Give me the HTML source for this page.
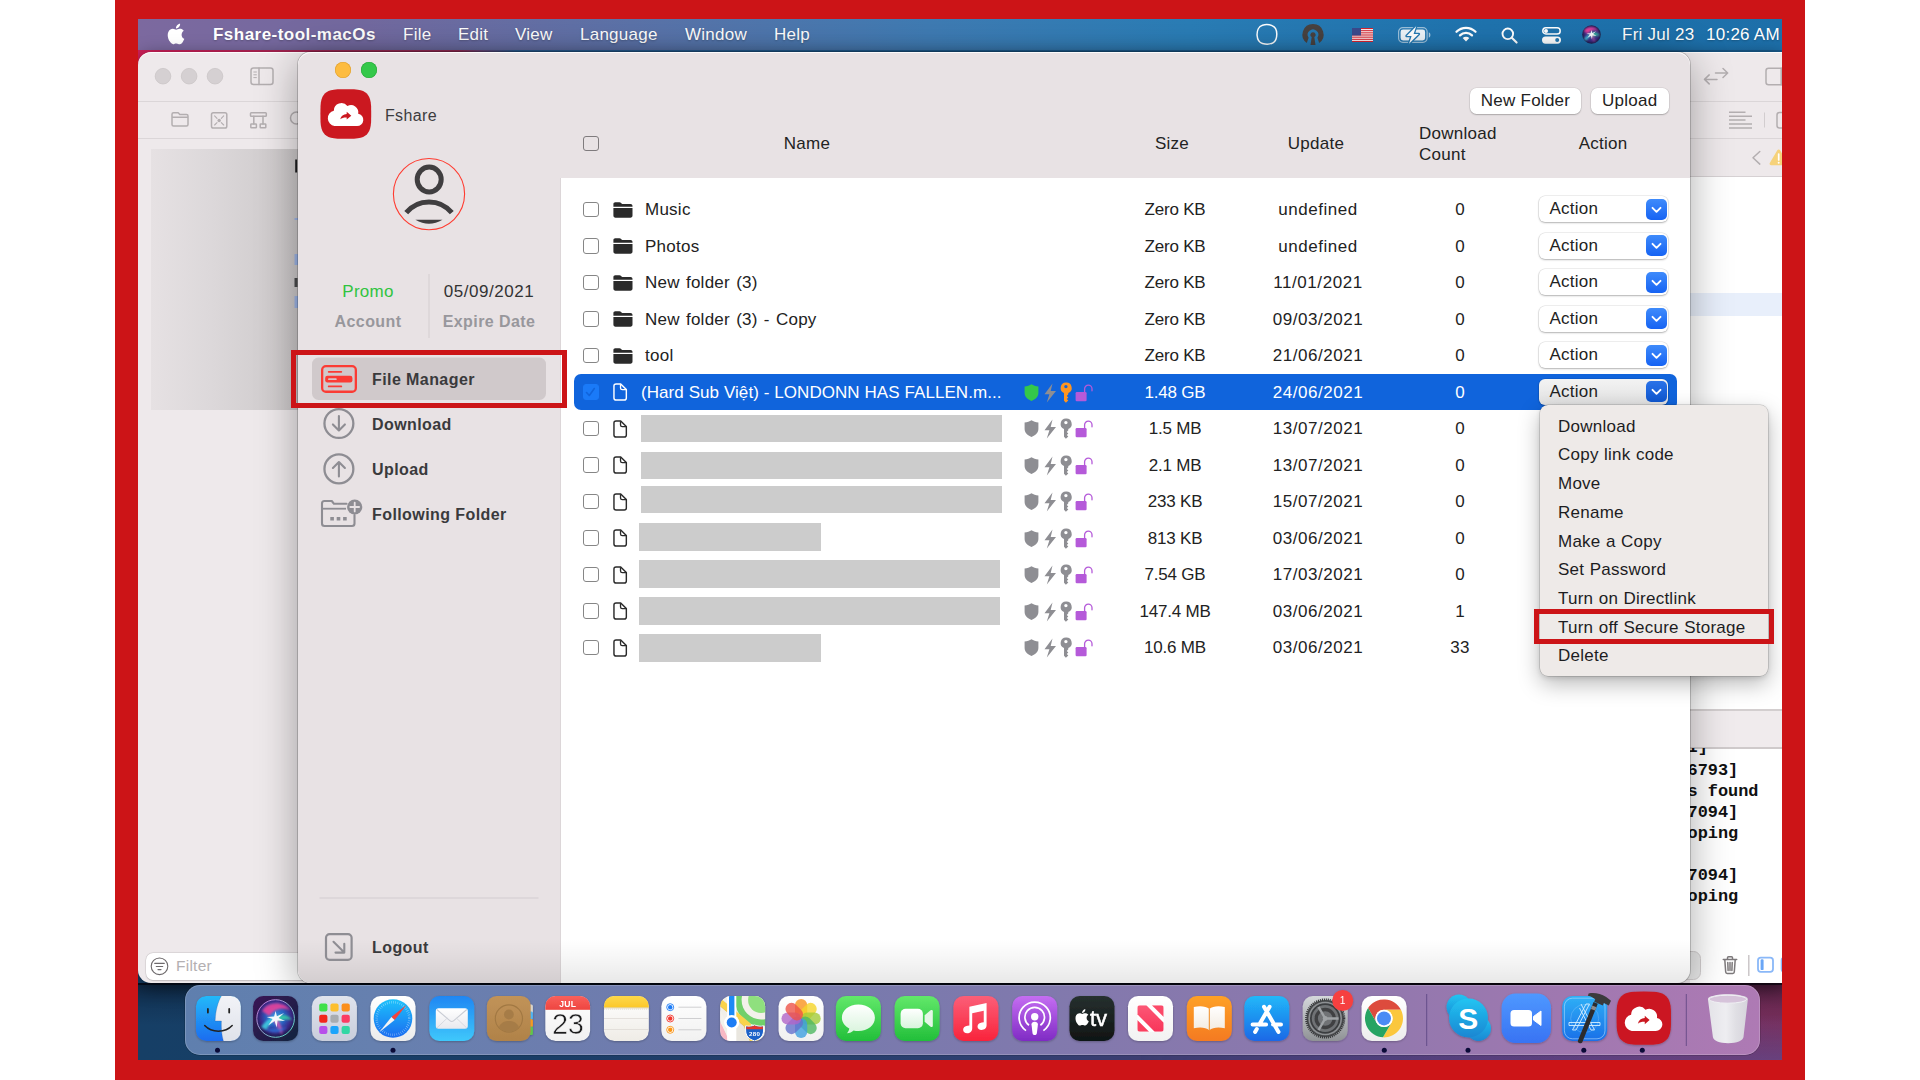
<!DOCTYPE html>
<html lang="en">
<head>
<meta charset="utf-8">
<title>Fshare-tool-macOs</title>
<style>
*{box-sizing:border-box;margin:0;padding:0}
html,body{width:1920px;height:1080px;overflow:hidden;background:#fff}
body{position:relative;font-family:"Liberation Sans",sans-serif;color:#222;font-size:17px;letter-spacing:.25px}
.a{position:absolute}
.t{position:absolute;white-space:nowrap;line-height:20px;height:20px}
.c{text-align:center}
svg{position:absolute;overflow:visible}
/* wallpaper */
#wall{left:138px;top:19px;width:1644px;height:1041px;background:
 linear-gradient(90deg,#163f66 0%,#1a3d66 25%,#2d3f70 50%,#4a3a70 72%,#6a2f62 88%,#7a2f5c 100%)}
/* menubar */
#mbar{left:138px;top:19px;width:1644px;height:30.8px;background:linear-gradient(90deg,#7c699f 0%,#72699f 14%,#5b72a8 30%,#3f7bb3 48%,#2a7db6 64%,#1f73ae 82%,#1d6fa9 100%);color:#fff}
#mbar .t{color:#fff;font-size:17px;top:6.2px;text-shadow:0 1px 2px rgba(0,0,0,.25)}
/* back window */
#bw{left:138px;top:52px;width:1644px;height:931.3px;border-radius:13px 0 0 13px;background:#eee9eb;overflow:hidden;box-shadow:0 4px 18px rgba(0,0,0,.5)}
/* main window */
#mw{left:298px;top:52px;width:1392px;height:931.3px;border-radius:13px;background:#fff;overflow:hidden;box-shadow:0 0 0 1px rgba(0,0,0,.18)}
#mw:after,#bw:after{content:'';position:absolute;left:0;top:0;right:0;height:14px;border-radius:13px 13px 0 0;box-shadow:inset 0 1px 0 rgba(255,255,255,.85);pointer-events:none}
#bw:after{border-radius:13px 0 0 0}
#mwsh{left:298px;top:52px;width:1392px;height:931.3px;border-radius:13px;box-shadow:0 8px 40px 0 rgba(0,0,0,.34)}
#side{left:0;top:0;width:262.5px;height:932px;background:#e8e2e4;border-right:1px solid #dcd6d8}
#head{left:262px;top:0;width:1130px;height:126px;background:#e8e2e4}
.row{position:absolute;left:0;width:1920px;height:36px}
.cb{position:absolute;left:583.3px;width:15.4px;height:15.4px;border:1.3px solid #868686;border-radius:3px;background:#fff}
.act{position:absolute;left:1538.5px;width:129.5px;height:26px;border-radius:6px;background:#fff;box-shadow:0 0 0 .5px rgba(0,0,0,.12),0 1px 2px rgba(0,0,0,.25)}
.act b{position:absolute;right:1.5px;top:2.5px;width:21px;height:21px;border-radius:5px;background:linear-gradient(#3f8bfb,#1663f3)}
.act span{position:absolute;left:11px;top:2.8px;font-size:17px;line-height:20px}
.ph{position:absolute;background:#ccc}
/* frame */
.red{position:absolute;background:#cc1417}
.sb{font-weight:bold;font-size:16px;letter-spacing:.42px}
.btn{background:#fff;border-radius:6.5px;box-shadow:0 0 0 .5px rgba(0,0,0,.10),0 1px 1.5px rgba(0,0,0,.22)}
.fo{position:absolute;left:613px;width:20px;height:16px}
.fi{position:absolute;left:612.7px;width:14.3px;height:18.1px}
.ic{position:absolute;left:1024px;width:70px;height:22px}
.sel{position:absolute;left:573.5px;width:1103px;height:36.5px;border-radius:7px;background:#1064dc}
.w{color:#fff}
.mono{letter-spacing:0;font-family:"Liberation Mono","DejaVu Sans Mono",monospace;font-weight:bold;font-size:16.9px;line-height:21px;white-space:pre;color:#111}
#walltop{left:138px;top:46px;width:1644px;height:24px;background:linear-gradient(90deg,#d0205a 0%,#c42258 5%,#a82a58 12%,#9a2c58 19.5%,#6a4a80 21%,#2a5f96 23%,#1c5f94 50%,#185a8c 100%)}
#botsh{left:0;bottom:0;width:1392px;height:44px;background:linear-gradient(180deg,rgba(0,0,0,0),rgba(0,0,0,.03) 40%,rgba(0,0,0,.09))}
#dline{left:138px;top:983.2px;width:1644px;height:1.4px;background:rgba(0,0,10,.62)}
#wallb{left:138px;top:983px;width:1644px;height:77px;background:linear-gradient(180deg,rgba(0,0,10,.38) 0,rgba(0,0,10,.12) 30%,rgba(0,0,10,0) 55%)}
#wallc{left:1138px;top:983px;width:644px;height:77px;background:linear-gradient(180deg,rgba(70,100,190,0) 40%,rgba(70,100,190,.34) 100%);-webkit-mask-image:linear-gradient(90deg,transparent,#000 70%);mask-image:linear-gradient(90deg,transparent,#000 70%)}
.act.pr{background:linear-gradient(#f3f3f3,#e1e1e1)}
.act.pr b{background:linear-gradient(#2a72e8,#0f57d0)}

</style>
</head>
<body>
<div id="wall" class="a"></div>
<div id="wallb" class="a"></div>
<div id="wallc" class="a"></div>
<div id="dline" class="a"></div>
<div id="walltop" class="a"></div>
<div id="mbar" class="a">
<svg style="left:28px;top:3.500px" width="19" height="22" viewBox="0 0 19 22"><path fill="#fff" d="M15.6 11.7c0-2.6 2.1-3.8 2.2-3.9-1.2-1.800-3.100-2-3.700-2-1.600-.2-3.100.9-3.900.9-.8 0-2-.9-3.400-.9-1.700 0-3.300 1-4.200 2.600-1.800 3.100-.5 7.700 1.300 10.200.9 1.200 1.900 2.600 3.200 2.600 1.300-.1 1.800-.8 3.300-.8 1.600 0 2 .8 3.400.8 1.400 0 2.300-1.300 3.100-2.500 1-1.400 1.400-2.800 1.400-2.900 0 0-2.700-1-2.700-4.100zM13 4c.7-.9 1.200-2.100 1.100-3.300-1 0-2.300.7-3 1.600-.700.700-1.300 2-1.100 3.100 1.100.1 2.300-.6 3-1.400z"/></svg>
<span class="t" id="m1" style="left:75px;font-weight:bold;letter-spacing:.47px">Fshare-tool-macOs</span>
<span class="t" id="m2" style="left:265px">File</span>
<span class="t" id="m3" style="left:320px">Edit</span>
<span class="t" id="m4" style="left:377px">View</span>
<span class="t" id="m5" style="left:442px">Language</span>
<span class="t" id="m6" style="left:547px">Window</span>
<span class="t" id="m7" style="left:636px">Help</span>
<!-- status icons -->
<svg style="left:1118px;top:5px" width="22" height="21" viewBox="0 0 22 21"><path fill="none" stroke="#fff" stroke-width="1.500" d="M6.500 1.200C9 .5 13 .4 16 1.600c3.200 1.300 4.800 4.400 4.800 8.400 0 4-1.200 7.400-3.800 8.800-2.600 1.400-7 1.600-10.500.7C3.100 18.600 1.400 15.500 1.100 11.500.8 7 2.600 2.400 6.500 1.200z"/></svg>
<svg style="left:1164px;top:5px" width="22" height="21" viewBox="0 0 22 21"><path fill="#484240" d="M11 0a10.500 10.500 0 0 0-6.200 19l1.800-5.200a5.300 5.300 0 1 1 8.800 0l1.800 5.200A10.500 10.500 0 0 0 11 0zm0 8.200a2.600 2.600 0 0 0-1.300 4.900L8.500 21h5l-1.200-7.900A2.600 2.600 0 0 0 11 8.200z"/></svg>
<svg style="left:1214px;top:9px" width="21" height="14" viewBox="0 0 21 14"><rect width="21" height="14" fill="#fff"/><g fill="#d8242f"><rect width="21" height="1.100"/><rect y="2.150" width="21" height="1.100"/><rect y="4.300" width="21" height="1.100"/><rect y="6.450" width="21" height="1.100"/><rect y="8.600" width="21" height="1.100"/><rect y="10.750" width="21" height="1.100"/><rect y="12.900" width="21" height="1.100"/></g><rect width="9" height="7.500" fill="#3b4a8c"/></svg>
<svg style="left:1260px;top:8px" width="33" height="16" viewBox="0 0 33 16"><rect x=".6" y=".6" width="28.500" height="14.800" rx="4.200" fill="none" stroke="#fff" stroke-opacity=".55" stroke-width="1.200"/><rect x="2.600" y="2.600" width="24.500" height="10.800" rx="2.400" fill="#fff" fill-opacity=".92"/><path d="M30.800 5.300v5.400c1-.4 1.600-1.400 1.600-2.700s-.6-2.300-1.600-2.700z" fill="#fff" fill-opacity=".6"/><path d="M18.200 -.8L8.600 9h5l-2.600 7.800L20.800 7h-5.200z" fill="#2479b3" stroke="#2479b3" stroke-width="2.600" stroke-linejoin="round"/><path d="M18.200 -.8L8.600 9h5l-2.600 7.800L20.800 7h-5.200z" fill="#fff"/></svg>
<svg style="left:1317px;top:7px" width="22" height="16" viewBox="0 0 22 16"><g fill="none" stroke="#fff" stroke-linecap="round"><path stroke-width="2.300" d="M1.500 5.800a13.500 13.500 0 0 1 19 0"/><path stroke-width="2.300" d="M5 9.400a8.500 8.500 0 0 1 12 0"/></g><path fill="#fff" d="M11 15.600l-3.300-3.500a4.600 4.600 0 0 1 6.600 0z"/></svg>
<svg style="left:1363px;top:8px" width="17" height="17" viewBox="0 0 17 17"><circle cx="6.800" cy="6.800" r="5.300" fill="none" stroke="#fff" stroke-width="1.900"/><path d="M10.800 10.800l4.800 4.800" stroke="#fff" stroke-width="2.100" stroke-linecap="round"/></svg>
<svg style="left:1404px;top:8px" width="19" height="17" viewBox="0 0 19 17"><rect x=".8" y=".8" width="17.400" height="6.200" rx="3.100" fill="none" stroke="#fff" stroke-width="1.500"/><circle cx="4" cy="3.900" r="2" fill="#fff"/><rect y="9.500" width="19" height="7.200" rx="3.600" fill="#fff"/><circle cx="15.200" cy="13.100" r="2" fill="#2479b3"/></svg>
<svg style="left:1444.300px;top:6.300px" width="19" height="19" viewBox="0 0 45 45"><defs><radialGradient id="mS" cx=".5" cy=".5" r=".5"><stop offset="0" stop-color="#2a4fa8"/><stop offset=".7" stop-color="#3b2a80"/><stop offset="1" stop-color="#1e1b48"/></radialGradient><filter id="mB" x="-20%" y="-20%" width="140%" height="140%"><feGaussianBlur stdDeviation="2"/></filter><clipPath id="mC"><circle cx="22.500" cy="22.500" r="22"/></clipPath></defs><circle cx="22.500" cy="22.500" r="22" fill="url(#mS)"/><g clip-path="url(#mC)"><g filter="url(#mB)"><path d="M4 14c6-10 24-13 35 0-9-4-19-2-25 7z" fill="#e8409a"/><path d="M22 20c4 4 9 13 8 22-3-6-7-12-10-17z" fill="#e85ab0" fill-opacity=".85"/><path d="M24 19c6-2 15-1 19 6-6-1-12 0-18 1z" fill="#35d8a0" fill-opacity=".9"/><path d="M4 34c5-7 12-12 20-14-5 5-9 10-13 17z" fill="#40e0e8" fill-opacity=".9"/></g><path d="M22.500 12l1.800 7 9.200-4-7.200 6.500 8.200 4-9.700-.8-1.300 9-2.500-8.500-8.500 5.800 6-8.300-8-2.700 9.700-.5z" fill="#fff" fill-opacity=".95" filter="url(#mB2)"/></g><defs><filter id="mB2" x="-20%" y="-20%" width="140%" height="140%"><feGaussianBlur stdDeviation="1"/></filter></defs></svg>
<span class="t" id="m8" style="left:1484px">Fri Jul 23</span>
<span class="t" id="m9" style="left:1568px">10:26 AM</span>
</div>
<!-- background (Xcode) window -->
<div id="bw" class="a">
<div class="a" style="left:0;top:49px;width:1644px;height:1px;background:#dbd6d8"></div>
<div class="a" style="left:0;top:86px;width:1644px;height:1px;background:#dbd6d8"></div>
<div class="a" style="left:13px;top:97px;width:150px;height:261px;background:linear-gradient(90deg,#e6e1e3 0%,#dcd8da 40%,#cbc7c8 100%)"></div>
<!-- right editor -->
<div class="a" style="left:1552px;top:124px;width:92px;height:1px;background:#d6d1d3"></div>
<div class="a" style="left:1552px;top:125px;width:92px;height:533px;background:#fff"></div>
<div class="a" style="left:1552px;top:241px;width:92px;height:23px;background:#e8effb"></div>
<div class="a" style="left:1552px;top:657px;width:92px;height:1px;background:#d3cecf"></div>
<div class="a" style="left:1552px;top:658px;width:92px;height:38px;background:#f0ebed"></div>
<div class="a" style="left:1552px;top:696px;width:92px;height:1px;background:#cfcacb"></div>
<div class="a" style="left:1552px;top:697px;width:92px;height:235px;background:#fff"></div>
<div class="a mono" id="c1" style="left:1549.500px;top:684.5px">1]</div>
<div class="a mono" id="c2" style="left:1549.500px;top:707.5px">6793]</div>
<div class="a mono" id="c3" style="left:1549.500px;top:728.5px">s found</div>
<div class="a mono" id="c4" style="left:1549.500px;top:749.5px">7094]</div>
<div class="a mono" id="c5" style="left:1549.500px;top:770.5px">oping</div>
<div class="a mono" id="c6" style="left:1549.500px;top:812.5px">7094]</div>
<div class="a mono" id="c7" style="left:1549.500px;top:833.5px">oping</div>
<div class="a" style="left:1552px;top:658px;width:92px;height:38px;background:#f0ebed;border-top:1px solid #d3cecf;border-bottom:1px solid #cfcacb"></div>
<!-- filter field -->
<div class="a" style="left:7.500px;top:900.500px;width:300px;height:27.500px;border-radius:7px;background:#fff;box-shadow:0 0 0 .5px rgba(0,0,0,.1),0 .5px 1.500px rgba(0,0,0,.15)"></div>
<span class="t" id="bf" style="left:38px;top:904px;font-size:15.500px;color:#b4b0b2">Filter</span>
</div>
<svg style="left:0;top:0" width="1920" height="1080" viewBox="0 0 1920 1080">
<g fill="#d5d0d2" stroke="#cac5c7" stroke-width=".8"><circle cx="163" cy="76.200" r="7.800"/><circle cx="189.100" cy="76.200" r="7.800"/><circle cx="215" cy="76.200" r="7.800"/></g>
<g fill="none" stroke="#b3aeb0" stroke-width="1.500" stroke-linejoin="round" stroke-linecap="round">
<rect x="251" y="68" width="22" height="16.500" rx="2.500"/><path d="M259 68v16.500"/><path d="M253.800 72h2.600M253.800 74.800h2.600M253.800 77.600h2.600" stroke-width="1"/>
<path d="M172 115v9.500a1.500 1.500 0 0 0 1.500 1.500h13a1.500 1.500 0 0 0 1.500-1.500v-8.500a1.500 1.500 0 0 0-1.500-1.500h-6.700l-1.600-1.700h-4.700a1.500 1.500 0 0 0-1.500 1.500zM172 117.200h16"/>
<rect x="211.500" y="112.800" width="15.300" height="15.300" rx="1.800"/><path d="M214.600 115.900l2.400 2.400M223.700 115.900l-2.400 2.400M214.600 125l2.400-2.400M223.700 125l-2.400-2.400" stroke-width="1.100"/>
<rect x="250.500" y="112.800" width="15.800" height="3.400" rx=".8"/><path d="M253.800 116.200v7.800M263 116.200v7.800"/><rect x="250.800" y="124" width="5.600" height="3.800" rx=".6"/><rect x="260.200" y="124" width="5.600" height="3.800" rx=".6"/>
<circle cx="296.500" cy="118" r="6"/>
<path d="M1715.500 73h12M1723 68.500l4.700 4.500-4.700 4.500M1717 79.400h-12.500M1709.200 74.900l-4.700 4.500 4.700 4.500"/>
<rect x="1766" y="68.300" width="30" height="16.500" rx="2.500"/><path d="M1781.200 68.300v16.500"/>
<rect x="1777" y="112.500" width="20" height="15.500" rx="2.500"/>
<path d="M1759.800 151.500l-6.800 6.300 6.800 6.300"/>
</g>
<circle cx="219.150" cy="120.450" r="1.700" fill="#b3aeb0"/>
<g stroke="#b3aeb0" stroke-width="1.500"><path d="M1729 112.300h16.500M1729 116.200h23M1729 120.100h16.500M1729 124h23M1729 127.900h23"/></g>
<path d="M1764.500 112.500v15" stroke="#d2cdcf" stroke-width="1"/>
<path d="M1777.300 150.300a1.600 1.600 0 0 1 2.800 0l7.500 12.600a1.600 1.600 0 0 1-1.400 2.400h-15a1.600 1.600 0 0 1-1.400-2.400z" fill="#f6d27a"/>
<path d="M1778.700 154v6" stroke="#fff" stroke-width="1.700" stroke-linecap="round"/><circle cx="1778.700" cy="162.700" r="1" fill="#fff"/>
<!-- left blurry marks -->
<rect x="295.200" y="159.500" width="1.900" height="13" fill="#1d1d1f"/>
<g fill="#9db4e6"><rect x="294.500" y="218" width="4" height="2"/><rect x="294.500" y="254" width="4" height="11"/><rect x="294.500" y="296" width="4" height="12"/></g>
<rect x="294.500" y="278" width="3" height="9" fill="#4a4a4c"/>
<!-- filter icon -->
<circle cx="159.500" cy="966.300" r="8.300" fill="none" stroke="#6e6a6c" stroke-width="1.100"/>
<path d="M154.700 963.300h9.600M156.300 966.500h6.400M158 969.600h3" stroke="#6e6a6c" stroke-width="1.200" stroke-linecap="round"/>
<!-- bottom right toolbar -->
<rect x="1640" y="951.500" width="60.500" height="28" rx="7" fill="#e9e9e9" stroke="#d2cecf" stroke-width="1"/>
<g fill="none" stroke="#7d797b" stroke-width="1.500" stroke-linecap="round" stroke-linejoin="round"><path d="M1723.300 959.500h13.400M1727.500 959.300v-1.600a1 1 0 0 1 1-1h3a1 1 0 0 1 1 1v1.600M1724.800 959.800l.9 12.200a1.500 1.500 0 0 0 1.500 1.400h5.600a1.500 1.500 0 0 0 1.500-1.400l.9-12.200M1727.800 962.500l.3 8M1730 962.500v8M1732.200 962.500l-.3 8"/></g>
<path d="M1748.800 955v21" stroke="#c8c3c5" stroke-width="1.400"/>
<rect x="1758" y="957.600" width="15" height="14.200" rx="2.800" fill="none" stroke="#8ab8f8" stroke-width="1.800"/><rect x="1760.600" y="959.300" width="3" height="10.800" rx="1.200" fill="#6aa6f6"/>
<rect x="1781.600" y="957.600" width="10" height="14.200" rx="2.800" fill="none" stroke="#8ab8f8" stroke-width="1.800"/>
</svg>

<div id="mwsh" class="a"></div>
<div id="mw" class="a">
<div id="side" class="a"></div>
<div id="head" class="a"></div>
<div id="botsh" class="a"></div>
</div>
<!-- sidebar -->
<div class="a" style="left:335px;top:62px;width:16px;height:16px;border-radius:50%;background:#fdbc40;box-shadow:inset 0 0 0 .6px #dfa030"></div>
<div class="a" style="left:361px;top:62px;width:16px;height:16px;border-radius:50%;background:#34c84a;box-shadow:inset 0 0 0 .6px #2aa83a"></div>
<svg style="left:0;top:0" width="1920" height="1080" viewBox="0 0 1920 1080">
<path fill="#cb1820" d="M371.2 114.0L371.1 122.0L370.7 125.7L370.1 128.5L369.2 130.9L368.1 132.8L366.8 134.5L365.1 135.8L363.1 136.9L360.7 137.7L357.8 138.3L354.0 138.7L345.8 138.8L337.6 138.7L333.8 138.3L330.9 137.7L328.5 136.9L326.5 135.8L324.8 134.5L323.5 132.8L322.4 130.9L321.5 128.5L320.9 125.7L320.5 122.0L320.4 114.0L320.5 106.0L320.9 102.3L321.5 99.5L322.4 97.1L323.5 95.2L324.8 93.5L326.5 92.2L328.5 91.1L330.9 90.3L333.8 89.7L337.6 89.3L345.8 89.2L354.0 89.3L357.8 89.7L360.7 90.3L363.1 91.1L365.1 92.2L366.8 93.5L368.1 95.2L369.2 97.1L370.1 99.5L370.7 102.3L371.1 106.0Z"/>
<path fill="#fff" d="M334.500 126h22.500a6.200 6.200 0 0 0 1.200-12.300a7.300 7.300 0 0 0-10.800-7.600a7.600 7.600 0 0 0-13.600 4.600a7.800 7.800 0 0 0 .7 15.300z"/>
<path fill="#cb1820" d="M340.200 119.200c.8-3.400 3.200-5.100 6.500-5.300v-2.100l4.600 3.900-4.600 3.900v-2.200c-2.700-.1-4.800.3-6.500 1.800z"/>
<circle cx="429" cy="194.100" r="35.600" fill="none" stroke="#ff3b30" stroke-width="1.100"/>
<ellipse cx="429.200" cy="179.500" rx="12" ry="12.500" fill="none" stroke="#403e40" stroke-width="5"/>
<path d="M406.200 212.700a29.500 29.500 0 0 1 45.600 0" fill="none" stroke="#403e40" stroke-width="5"/>
<path d="M415.400 219.800h27.100q-13.550 7.800-27.100 0z" fill="#403e40"/>
<rect x="428.500" y="274" width="1" height="64" fill="#d3cdcf"/>
<!-- file manager -->
<rect x="312" y="357.500" width="234" height="42.500" rx="6.500" fill="#d0c9cb"/>
<rect x="322.150" y="366.150" width="33.700" height="25.600" rx="3.800" fill="none" stroke="#fb3b34" stroke-width="2.300"/>
<path d="M328.700 371.800h12.600M328.700 386.400h12.600" stroke="#fb3b34" stroke-width="1.800" stroke-linecap="round"/>
<rect x="325.200" y="375.800" width="27.200" height="6.700" rx="2.200" fill="#fb3b34"/>
<path d="M328.900 379.200h7" stroke="#d9c4c6" stroke-width="1.700" stroke-linecap="round"/>
<!-- download -->
<circle cx="338.900" cy="423.500" r="14.450" fill="none" stroke="#8e8d93" stroke-width="2.300"/>
<path d="M338.900 416v14M332.900 424.400l6 6 6-6" fill="none" stroke="#8e8d93" stroke-width="2.100" stroke-linecap="round" stroke-linejoin="round"/>
<circle cx="338.900" cy="468.900" r="14.450" fill="none" stroke="#8e8d93" stroke-width="2.300"/>
<path d="M338.900 476.400v-14M332.900 468l6-6 6 6" fill="none" stroke="#8e8d93" stroke-width="2.100" stroke-linecap="round" stroke-linejoin="round"/>
<!-- following folder -->
<path d="M346.500 503.800h-12.500l-2.200-2.800h-7.300a2.500 2.500 0 0 0-2.500 2.500v20a2.500 2.500 0 0 0 2.500 2.500h27.500a2.500 2.500 0 0 0 2.500-2.500v-8.500" fill="none" stroke="#8e8d93" stroke-width="2.100" stroke-linejoin="round" stroke-linecap="round"/>
<path d="M322.500 508.700h23.500" stroke="#8e8d93" stroke-width="1.800"/>
<path d="M330.300 518.800h3.600M336.700 518.800h3.600M343.100 518.800h3.600" stroke="#8e8d93" stroke-width="3.400"/>
<circle cx="354.700" cy="507" r="7.600" fill="#8e8d93"/>
<path d="M350.300 507h8.800M354.700 502.600v8.800" stroke="#e8e2e4" stroke-width="1.800" stroke-linecap="round"/>
<!-- logout -->
<rect x="319.500" y="897.500" width="219" height="1" fill="#d2cccf"/>
<rect x="326" y="934.200" width="25.600" height="25.600" rx="3.600" fill="none" stroke="#8e8d93" stroke-width="2.200"/>
<path d="M333.500 941.800l10.500 10.500M344.300 943.800v8.800h-8.800" fill="none" stroke="#8e8d93" stroke-width="2.100" stroke-linecap="round" stroke-linejoin="round"/>
</svg>
<span class="t" id="s0" style="left:385px;top:105.800px;font-size:16px;letter-spacing:.35px;color:#3c3c3e">Fshare</span>
<span class="t c" id="s1" style="left:318px;width:100px;top:281.800px;color:#30c440">Promo</span>
<span class="t c sb" id="s2" style="left:318px;width:100px;top:312.200px;color:#98979c">Account</span>
<span class="t c" id="s3" style="left:439px;width:100px;top:281.800px;letter-spacing:.55px;color:#333">05/09/2021</span>
<span class="t c sb" id="s4" style="left:429px;width:120px;top:312.200px;color:#98979c">Expire Date</span>
<span class="t sb" id="s5" style="left:372px;top:369.700px;color:#3a3a3c">File Manager</span>
<span class="t sb" id="s6" style="left:372px;top:414.700px;color:#3a3a3c">Download</span>
<span class="t sb" id="s7" style="left:372px;top:460.200px;color:#3a3a3c">Upload</span>
<span class="t sb" id="s8" style="left:372px;top:504.700px;color:#3a3a3c">Following Folder</span>
<span class="t sb" id="s9" style="left:372px;top:938.200px;color:#3a3a3c">Logout</span>
<!-- red highlight -->
<div class="a" style="left:291px;top:350.200px;width:276px;height:57.500px;border:5px solid #cc1417"></div>

<!-- header -->
<div class="a btn" style="left:1470px;top:88px;width:111px;height:26px"><span class="t c" id="h1" style="left:0;width:111px;top:3.200px">New Folder</span></div>
<div class="a btn" style="left:1591px;top:88px;width:77.500px;height:26px"><span class="t c" id="h2" style="left:0;width:77.500px;top:3.200px">Upload</span></div>
<div class="cb" style="top:136px;background:transparent;border-color:#7f7b7d"></div>
<span class="t c" id="h3" style="left:757px;width:100px;top:134.400px">Name</span>
<span class="t c" id="h4" style="left:1122px;width:100px;top:134.400px">Size</span>
<span class="t c" id="h5" style="left:1266px;width:100px;top:134.400px">Update</span>
<span class="t" id="h6" style="left:1419px;top:123.500px">Download</span>
<span class="t" id="h7" style="left:1419px;top:144.600px">Count</span>
<span class="t c" id="h8" style="left:1553px;width:100px;top:134.400px">Action</span>

<!-- rows -->
<div class="cb" style="top:201.8px"></div>
<svg class="fo" style="top:201.8px" viewBox="0 0 20 16"><path fill="#2a2a2a" d="M.4 2.200C.4 1 1.200.3 2.300.3h4.200c.7 0 1.100.2 1.600.7l.7.700c.3.300.6.400 1.100.400h7.600c1.200 0 2 .8 2 2v.7H.4z"/><path fill="#2a2a2a" d="M.4 5.900h19.100v7.700c0 1.300-.8 2.100-2.100 2.100H2.500c-1.300 0-2.100-.8-2.100-2.100z"/></svg>
<span class="t" id="r0n" style="left:645px;top:200.3px;word-spacing:1.200px">Music</span>
<span class="t c" id="r0s" style="left:1125px;width:100px;top:200.3px;letter-spacing:-.2px">Zero KB</span>
<span class="t c" id="r0d" style="left:1268px;width:100px;top:200.3px;letter-spacing:.55px">undefined</span>
<span class="t c" id="r0c" style="left:1410px;width:100px;top:200.3px">0</span>
<div class="act" style="top:196.3px"><span>Action</span><b><svg style="left:5px;top:7px" width="11" height="8" viewBox="0 0 11 8"><path d="M1.500 1.800l4 4 4-4" fill="none" stroke="#fff" stroke-width="1.900" stroke-linecap="round" stroke-linejoin="round"/></svg></b></div>
<div class="cb" style="top:238.3px"></div>
<svg class="fo" style="top:238.3px" viewBox="0 0 20 16"><path fill="#2a2a2a" d="M.4 2.200C.4 1 1.200.3 2.300.3h4.200c.7 0 1.100.2 1.600.7l.7.700c.3.300.6.400 1.100.400h7.600c1.200 0 2 .8 2 2v.7H.4z"/><path fill="#2a2a2a" d="M.4 5.900h19.100v7.700c0 1.300-.8 2.100-2.100 2.100H2.500c-1.300 0-2.100-.8-2.100-2.100z"/></svg>
<span class="t" id="r1n" style="left:645px;top:236.8px;word-spacing:1.200px">Photos</span>
<span class="t c" id="r1s" style="left:1125px;width:100px;top:236.8px;letter-spacing:-.2px">Zero KB</span>
<span class="t c" id="r1d" style="left:1268px;width:100px;top:236.8px;letter-spacing:.55px">undefined</span>
<span class="t c" id="r1c" style="left:1410px;width:100px;top:236.8px">0</span>
<div class="act" style="top:232.8px"><span>Action</span><b><svg style="left:5px;top:7px" width="11" height="8" viewBox="0 0 11 8"><path d="M1.500 1.800l4 4 4-4" fill="none" stroke="#fff" stroke-width="1.900" stroke-linecap="round" stroke-linejoin="round"/></svg></b></div>
<div class="cb" style="top:274.8px"></div>
<svg class="fo" style="top:274.8px" viewBox="0 0 20 16"><path fill="#2a2a2a" d="M.4 2.200C.4 1 1.200.3 2.300.3h4.200c.7 0 1.100.2 1.600.7l.7.700c.3.300.6.400 1.100.400h7.600c1.200 0 2 .8 2 2v.7H.4z"/><path fill="#2a2a2a" d="M.4 5.900h19.100v7.700c0 1.300-.8 2.100-2.100 2.100H2.500c-1.300 0-2.100-.8-2.100-2.100z"/></svg>
<span class="t" id="r2n" style="left:645px;top:273.3px;word-spacing:1.200px">New folder (3)</span>
<span class="t c" id="r2s" style="left:1125px;width:100px;top:273.3px;letter-spacing:-.2px">Zero KB</span>
<span class="t c" id="r2d" style="left:1268px;width:100px;top:273.3px;letter-spacing:.55px">11/01/2021</span>
<span class="t c" id="r2c" style="left:1410px;width:100px;top:273.3px">0</span>
<div class="act" style="top:269.3px"><span>Action</span><b><svg style="left:5px;top:7px" width="11" height="8" viewBox="0 0 11 8"><path d="M1.500 1.800l4 4 4-4" fill="none" stroke="#fff" stroke-width="1.900" stroke-linecap="round" stroke-linejoin="round"/></svg></b></div>
<div class="cb" style="top:311.3px"></div>
<svg class="fo" style="top:311.3px" viewBox="0 0 20 16"><path fill="#2a2a2a" d="M.4 2.200C.4 1 1.200.3 2.300.3h4.200c.7 0 1.100.2 1.600.7l.7.700c.3.300.6.400 1.100.400h7.600c1.200 0 2 .8 2 2v.7H.4z"/><path fill="#2a2a2a" d="M.4 5.900h19.100v7.700c0 1.300-.8 2.100-2.100 2.100H2.500c-1.300 0-2.100-.8-2.100-2.100z"/></svg>
<span class="t" id="r3n" style="left:645px;top:309.8px;word-spacing:1.200px">New folder (3) - Copy</span>
<span class="t c" id="r3s" style="left:1125px;width:100px;top:309.8px;letter-spacing:-.2px">Zero KB</span>
<span class="t c" id="r3d" style="left:1268px;width:100px;top:309.8px;letter-spacing:.55px">09/03/2021</span>
<span class="t c" id="r3c" style="left:1410px;width:100px;top:309.8px">0</span>
<div class="act" style="top:305.8px"><span>Action</span><b><svg style="left:5px;top:7px" width="11" height="8" viewBox="0 0 11 8"><path d="M1.500 1.800l4 4 4-4" fill="none" stroke="#fff" stroke-width="1.900" stroke-linecap="round" stroke-linejoin="round"/></svg></b></div>
<div class="cb" style="top:347.8px"></div>
<svg class="fo" style="top:347.8px" viewBox="0 0 20 16"><path fill="#2a2a2a" d="M.4 2.200C.4 1 1.200.3 2.300.3h4.200c.7 0 1.100.2 1.600.7l.7.700c.3.300.6.400 1.100.400h7.600c1.200 0 2 .8 2 2v.7H.4z"/><path fill="#2a2a2a" d="M.4 5.900h19.100v7.700c0 1.300-.8 2.100-2.100 2.100H2.500c-1.300 0-2.100-.8-2.100-2.100z"/></svg>
<span class="t" id="r4n" style="left:645px;top:346.3px;word-spacing:1.200px">tool</span>
<span class="t c" id="r4s" style="left:1125px;width:100px;top:346.3px;letter-spacing:-.2px">Zero KB</span>
<span class="t c" id="r4d" style="left:1268px;width:100px;top:346.3px;letter-spacing:.55px">21/06/2021</span>
<span class="t c" id="r4c" style="left:1410px;width:100px;top:346.3px">0</span>
<div class="act" style="top:342.3px"><span>Action</span><b><svg style="left:5px;top:7px" width="11" height="8" viewBox="0 0 11 8"><path d="M1.500 1.800l4 4 4-4" fill="none" stroke="#fff" stroke-width="1.900" stroke-linecap="round" stroke-linejoin="round"/></svg></b></div>
<div class="sel" style="top:373.8px"></div>
<div class="cb" style="top:384.3px;background:#1a7af8;border-color:#1a7af8"><svg style="left:1px;top:1.500px" width="11" height="10" viewBox="0 0 11 10"><path d="M1.500 5.500l2.800 3 5-7" fill="none" stroke="#1064dc" stroke-width="1.600" stroke-linecap="round" stroke-linejoin="round"/></svg></div>
<svg class="fi" style="top:383.3px" viewBox="0 0 15 19"><path fill="none" stroke="#fff" stroke-width="1.500" stroke-linejoin="round" d="M3.200 1h4.900l5.900 5.900v8.800c0 1.400-.8 2.200-2.200 2.200H3.200C1.800 17.900 1 17.100 1 15.700V3.200C1 1.800 1.800 1 3.200 1z"/><path fill="none" stroke="#fff" stroke-width="1.400" stroke-linejoin="round" d="M7.900 1.200v4c0 1.200.6 1.800 1.800 1.800h4"/></svg>
<span class="t w" id="r5n" style="left:641px;top:382.8px;letter-spacing:.07px">(Hard Sub Việt) - LONDONN HAS FALLEN.m...</span>
<svg class="ic" style="top:381.6px" viewBox="0 0 70 22"><path fill="#34c84a" d="M7.500 2.300c-1.800 1.200-4.300 2-6.900 2.200v6.300c0 4.200 2.900 6.600 6.900 8.200 4-1.600 6.900-4 6.900-8.200V4.500c-2.600-.2-5.100-1-6.900-2.200z"/><path fill="#8e8e93" d="M28.500 1.500l-8 10.800h4.900l-2.600 8.100 9.200-11.300h-5.300z"/><path fill="#ff9520" d="M41.900.6a5.400 5.400 0 0 0-1.900 10.400v7.700l1.900 2 2.400-2.300-1.500-1.500 1.500-1.500-1.500-1.500 1.500-1.600V11A5.400 5.400 0 0 0 41.900.6zm0 2.300a1.700 1.700 0 1 1 0 3.400 1.700 1.700 0 0 1 0-3.400z"/><rect x="51.600" y="10" width="11" height="9.300" rx="1.200" fill="#b55ad9"/><path fill="none" stroke="#b55ad9" stroke-width="1.300" stroke-linecap="round" d="M60.600 10V6.800a3.700 3.700 0 0 1 7.400 0v2"/></svg>
<span class="t c w" id="r5s" style="left:1125px;width:100px;top:382.8px;letter-spacing:-.2px">1.48 GB</span>
<span class="t c w" id="r5d" style="left:1268px;width:100px;top:382.8px;letter-spacing:.55px">24/06/2021</span>
<span class="t c w" id="r5c" style="left:1410px;width:100px;top:382.8px">0</span>
<div class="act pr" style="top:378.8px"><span>Action</span><b><svg style="left:5px;top:7px" width="11" height="8" viewBox="0 0 11 8"><path d="M1.500 1.800l4 4 4-4" fill="none" stroke="#fff" stroke-width="1.900" stroke-linecap="round" stroke-linejoin="round"/></svg></b></div>
<div class="cb" style="top:420.8px"></div>
<svg class="fi" style="top:419.8px" viewBox="0 0 15 19"><path fill="none" stroke="#2a2a2a" stroke-width="1.500" stroke-linejoin="round" d="M3.200 1h4.900l5.900 5.900v8.800c0 1.400-.8 2.200-2.200 2.200H3.200C1.800 17.900 1 17.100 1 15.700V3.200C1 1.800 1.800 1 3.200 1z"/><path fill="none" stroke="#2a2a2a" stroke-width="1.400" stroke-linejoin="round" d="M7.900 1.200v4c0 1.200.6 1.800 1.800 1.800h4"/></svg>
<div class="ph" style="left:641px;top:415.0px;width:361px;height:27.3px"></div>
<svg class="ic" style="top:418.1px" viewBox="0 0 70 22"><path fill="#8e8e93" d="M7.500 2.300c-1.800 1.200-4.300 2-6.900 2.200v6.300c0 4.200 2.900 6.600 6.900 8.200 4-1.600 6.900-4 6.900-8.200V4.500c-2.600-.2-5.100-1-6.900-2.200z"/><path fill="#8e8e93" d="M28.500 1.500l-8 10.800h4.900l-2.600 8.100 9.200-11.300h-5.300z"/><path fill="#8e8e93" d="M41.900.6a5.400 5.400 0 0 0-1.900 10.400v7.700l1.900 2 2.400-2.300-1.500-1.500 1.500-1.500-1.500-1.500 1.500-1.600V11A5.400 5.400 0 0 0 41.900.6zm0 2.300a1.700 1.700 0 1 1 0 3.400 1.700 1.700 0 0 1 0-3.400z"/><rect x="51.600" y="10" width="11" height="9.300" rx="1.200" fill="#b55ad9"/><path fill="none" stroke="#b55ad9" stroke-width="1.300" stroke-linecap="round" d="M60.600 10V6.800a3.700 3.700 0 0 1 7.400 0v2"/></svg>
<span class="t c" id="r6s" style="left:1125px;width:100px;top:419.3px;letter-spacing:-.2px">1.5 MB</span>
<span class="t c" id="r6d" style="left:1268px;width:100px;top:419.3px;letter-spacing:.55px">13/07/2021</span>
<span class="t c" id="r6c" style="left:1410px;width:100px;top:419.3px">0</span>
<div class="cb" style="top:457.3px"></div>
<svg class="fi" style="top:456.3px" viewBox="0 0 15 19"><path fill="none" stroke="#2a2a2a" stroke-width="1.500" stroke-linejoin="round" d="M3.200 1h4.900l5.900 5.900v8.800c0 1.400-.8 2.200-2.200 2.200H3.200C1.800 17.900 1 17.100 1 15.700V3.200C1 1.800 1.800 1 3.200 1z"/><path fill="none" stroke="#2a2a2a" stroke-width="1.400" stroke-linejoin="round" d="M7.900 1.200v4c0 1.200.6 1.800 1.800 1.800h4"/></svg>
<div class="ph" style="left:641px;top:452.3px;width:361px;height:27.0px"></div>
<svg class="ic" style="top:454.6px" viewBox="0 0 70 22"><path fill="#8e8e93" d="M7.500 2.300c-1.800 1.200-4.300 2-6.900 2.200v6.300c0 4.200 2.900 6.600 6.900 8.200 4-1.600 6.900-4 6.900-8.200V4.500c-2.600-.2-5.100-1-6.900-2.200z"/><path fill="#8e8e93" d="M28.500 1.500l-8 10.800h4.900l-2.600 8.100 9.200-11.300h-5.300z"/><path fill="#8e8e93" d="M41.900.6a5.400 5.400 0 0 0-1.900 10.400v7.700l1.900 2 2.400-2.300-1.500-1.500 1.500-1.500-1.500-1.500 1.500-1.600V11A5.400 5.400 0 0 0 41.900.6zm0 2.300a1.700 1.700 0 1 1 0 3.400 1.700 1.700 0 0 1 0-3.400z"/><rect x="51.600" y="10" width="11" height="9.300" rx="1.200" fill="#b55ad9"/><path fill="none" stroke="#b55ad9" stroke-width="1.300" stroke-linecap="round" d="M60.600 10V6.800a3.700 3.700 0 0 1 7.400 0v2"/></svg>
<span class="t c" id="r7s" style="left:1125px;width:100px;top:455.8px;letter-spacing:-.2px">2.1 MB</span>
<span class="t c" id="r7d" style="left:1268px;width:100px;top:455.8px;letter-spacing:.55px">13/07/2021</span>
<span class="t c" id="r7c" style="left:1410px;width:100px;top:455.8px">0</span>
<div class="cb" style="top:493.8px"></div>
<svg class="fi" style="top:492.8px" viewBox="0 0 15 19"><path fill="none" stroke="#2a2a2a" stroke-width="1.500" stroke-linejoin="round" d="M3.200 1h4.900l5.900 5.900v8.800c0 1.400-.8 2.200-2.200 2.200H3.200C1.800 17.900 1 17.100 1 15.700V3.200C1 1.800 1.800 1 3.200 1z"/><path fill="none" stroke="#2a2a2a" stroke-width="1.400" stroke-linejoin="round" d="M7.900 1.200v4c0 1.200.6 1.800 1.800 1.800h4"/></svg>
<div class="ph" style="left:641px;top:486.0px;width:361px;height:27.3px"></div>
<svg class="ic" style="top:491.1px" viewBox="0 0 70 22"><path fill="#8e8e93" d="M7.500 2.300c-1.800 1.200-4.300 2-6.900 2.200v6.300c0 4.200 2.900 6.600 6.900 8.200 4-1.600 6.900-4 6.900-8.200V4.500c-2.600-.2-5.100-1-6.900-2.200z"/><path fill="#8e8e93" d="M28.500 1.500l-8 10.800h4.900l-2.600 8.100 9.200-11.300h-5.300z"/><path fill="#8e8e93" d="M41.900.6a5.400 5.400 0 0 0-1.900 10.400v7.700l1.900 2 2.400-2.300-1.500-1.500 1.500-1.500-1.500-1.500 1.500-1.600V11A5.400 5.400 0 0 0 41.900.6zm0 2.300a1.700 1.700 0 1 1 0 3.400 1.700 1.700 0 0 1 0-3.400z"/><rect x="51.600" y="10" width="11" height="9.300" rx="1.200" fill="#b55ad9"/><path fill="none" stroke="#b55ad9" stroke-width="1.300" stroke-linecap="round" d="M60.600 10V6.800a3.700 3.700 0 0 1 7.400 0v2"/></svg>
<span class="t c" id="r8s" style="left:1125px;width:100px;top:492.3px;letter-spacing:-.2px">233 KB</span>
<span class="t c" id="r8d" style="left:1268px;width:100px;top:492.3px;letter-spacing:.55px">15/07/2021</span>
<span class="t c" id="r8c" style="left:1410px;width:100px;top:492.3px">0</span>
<div class="cb" style="top:530.3px"></div>
<svg class="fi" style="top:529.3px" viewBox="0 0 15 19"><path fill="none" stroke="#2a2a2a" stroke-width="1.500" stroke-linejoin="round" d="M3.200 1h4.900l5.900 5.900v8.800c0 1.400-.8 2.200-2.200 2.200H3.200C1.800 17.900 1 17.100 1 15.700V3.200C1 1.800 1.800 1 3.200 1z"/><path fill="none" stroke="#2a2a2a" stroke-width="1.400" stroke-linejoin="round" d="M7.900 1.200v4c0 1.200.6 1.800 1.800 1.800h4"/></svg>
<div class="ph" style="left:639px;top:523.3px;width:182px;height:27.4px"></div>
<svg class="ic" style="top:527.6px" viewBox="0 0 70 22"><path fill="#8e8e93" d="M7.500 2.300c-1.800 1.200-4.300 2-6.900 2.200v6.300c0 4.200 2.900 6.600 6.900 8.200 4-1.600 6.900-4 6.900-8.200V4.500c-2.600-.2-5.100-1-6.900-2.200z"/><path fill="#8e8e93" d="M28.500 1.500l-8 10.800h4.900l-2.600 8.100 9.200-11.300h-5.300z"/><path fill="#8e8e93" d="M41.900.6a5.400 5.400 0 0 0-1.900 10.400v7.700l1.900 2 2.400-2.300-1.500-1.500 1.500-1.500-1.500-1.500 1.500-1.600V11A5.400 5.400 0 0 0 41.900.6zm0 2.300a1.700 1.700 0 1 1 0 3.400 1.700 1.700 0 0 1 0-3.400z"/><rect x="51.600" y="10" width="11" height="9.300" rx="1.200" fill="#b55ad9"/><path fill="none" stroke="#b55ad9" stroke-width="1.300" stroke-linecap="round" d="M60.600 10V6.800a3.700 3.700 0 0 1 7.400 0v2"/></svg>
<span class="t c" id="r9s" style="left:1125px;width:100px;top:528.8px;letter-spacing:-.2px">813 KB</span>
<span class="t c" id="r9d" style="left:1268px;width:100px;top:528.8px;letter-spacing:.55px">03/06/2021</span>
<span class="t c" id="r9c" style="left:1410px;width:100px;top:528.8px">0</span>
<div class="cb" style="top:566.8px"></div>
<svg class="fi" style="top:565.8px" viewBox="0 0 15 19"><path fill="none" stroke="#2a2a2a" stroke-width="1.500" stroke-linejoin="round" d="M3.200 1h4.900l5.900 5.900v8.800c0 1.400-.8 2.200-2.200 2.200H3.200C1.800 17.900 1 17.100 1 15.700V3.200C1 1.800 1.800 1 3.200 1z"/><path fill="none" stroke="#2a2a2a" stroke-width="1.400" stroke-linejoin="round" d="M7.900 1.200v4c0 1.200.6 1.800 1.800 1.800h4"/></svg>
<div class="ph" style="left:639px;top:560.0px;width:361px;height:27.7px"></div>
<svg class="ic" style="top:564.1px" viewBox="0 0 70 22"><path fill="#8e8e93" d="M7.500 2.300c-1.800 1.200-4.300 2-6.900 2.200v6.300c0 4.200 2.900 6.600 6.900 8.200 4-1.600 6.900-4 6.900-8.200V4.500c-2.600-.2-5.100-1-6.900-2.200z"/><path fill="#8e8e93" d="M28.500 1.500l-8 10.800h4.900l-2.600 8.100 9.200-11.300h-5.300z"/><path fill="#8e8e93" d="M41.900.6a5.400 5.400 0 0 0-1.900 10.400v7.700l1.900 2 2.400-2.300-1.500-1.500 1.500-1.500-1.500-1.500 1.500-1.600V11A5.400 5.400 0 0 0 41.900.6zm0 2.300a1.700 1.700 0 1 1 0 3.400 1.700 1.700 0 0 1 0-3.400z"/><rect x="51.600" y="10" width="11" height="9.300" rx="1.200" fill="#b55ad9"/><path fill="none" stroke="#b55ad9" stroke-width="1.300" stroke-linecap="round" d="M60.600 10V6.800a3.700 3.700 0 0 1 7.400 0v2"/></svg>
<span class="t c" id="r10s" style="left:1125px;width:100px;top:565.3px;letter-spacing:-.2px">7.54 GB</span>
<span class="t c" id="r10d" style="left:1268px;width:100px;top:565.3px;letter-spacing:.55px">17/03/2021</span>
<span class="t c" id="r10c" style="left:1410px;width:100px;top:565.3px">0</span>
<div class="cb" style="top:603.3px"></div>
<svg class="fi" style="top:602.3px" viewBox="0 0 15 19"><path fill="none" stroke="#2a2a2a" stroke-width="1.500" stroke-linejoin="round" d="M3.200 1h4.900l5.900 5.900v8.800c0 1.400-.8 2.200-2.200 2.200H3.200C1.800 17.900 1 17.100 1 15.700V3.200C1 1.800 1.800 1 3.200 1z"/><path fill="none" stroke="#2a2a2a" stroke-width="1.400" stroke-linejoin="round" d="M7.900 1.200v4c0 1.200.6 1.800 1.800 1.800h4"/></svg>
<div class="ph" style="left:639px;top:597.3px;width:361px;height:27.4px"></div>
<svg class="ic" style="top:600.6px" viewBox="0 0 70 22"><path fill="#8e8e93" d="M7.500 2.300c-1.800 1.200-4.300 2-6.900 2.200v6.300c0 4.200 2.900 6.600 6.900 8.200 4-1.600 6.900-4 6.900-8.200V4.500c-2.600-.2-5.100-1-6.900-2.200z"/><path fill="#8e8e93" d="M28.500 1.500l-8 10.800h4.900l-2.600 8.100 9.200-11.300h-5.300z"/><path fill="#8e8e93" d="M41.900.6a5.400 5.400 0 0 0-1.900 10.400v7.700l1.900 2 2.400-2.300-1.500-1.500 1.500-1.500-1.500-1.500 1.500-1.600V11A5.400 5.400 0 0 0 41.900.6zm0 2.300a1.700 1.700 0 1 1 0 3.400 1.700 1.700 0 0 1 0-3.400z"/><rect x="51.600" y="10" width="11" height="9.300" rx="1.200" fill="#b55ad9"/><path fill="none" stroke="#b55ad9" stroke-width="1.300" stroke-linecap="round" d="M60.600 10V6.800a3.700 3.700 0 0 1 7.400 0v2"/></svg>
<span class="t c" id="r11s" style="left:1125px;width:100px;top:601.8px;letter-spacing:-.2px">147.4 MB</span>
<span class="t c" id="r11d" style="left:1268px;width:100px;top:601.8px;letter-spacing:.55px">03/06/2021</span>
<span class="t c" id="r11c" style="left:1410px;width:100px;top:601.8px">1</span>
<div class="cb" style="top:639.8px"></div>
<svg class="fi" style="top:638.8px" viewBox="0 0 15 19"><path fill="none" stroke="#2a2a2a" stroke-width="1.500" stroke-linejoin="round" d="M3.200 1h4.900l5.900 5.900v8.800c0 1.400-.8 2.200-2.200 2.200H3.200C1.800 17.900 1 17.100 1 15.700V3.200C1 1.800 1.800 1 3.200 1z"/><path fill="none" stroke="#2a2a2a" stroke-width="1.400" stroke-linejoin="round" d="M7.900 1.200v4c0 1.200.6 1.800 1.800 1.800h4"/></svg>
<div class="ph" style="left:639px;top:634.0px;width:182px;height:27.7px"></div>
<svg class="ic" style="top:637.1px" viewBox="0 0 70 22"><path fill="#8e8e93" d="M7.500 2.300c-1.800 1.200-4.300 2-6.900 2.200v6.300c0 4.200 2.900 6.600 6.900 8.200 4-1.600 6.900-4 6.900-8.200V4.500c-2.600-.2-5.100-1-6.900-2.200z"/><path fill="#8e8e93" d="M28.500 1.500l-8 10.800h4.900l-2.600 8.100 9.200-11.300h-5.300z"/><path fill="#8e8e93" d="M41.900.6a5.400 5.400 0 0 0-1.900 10.400v7.700l1.900 2 2.400-2.300-1.500-1.500 1.500-1.500-1.500-1.500 1.500-1.600V11A5.400 5.400 0 0 0 41.900.6zm0 2.300a1.700 1.700 0 1 1 0 3.400 1.700 1.700 0 0 1 0-3.400z"/><rect x="51.600" y="10" width="11" height="9.300" rx="1.200" fill="#b55ad9"/><path fill="none" stroke="#b55ad9" stroke-width="1.300" stroke-linecap="round" d="M60.600 10V6.800a3.700 3.700 0 0 1 7.400 0v2"/></svg>
<span class="t c" id="r12s" style="left:1125px;width:100px;top:638.3px;letter-spacing:-.2px">10.6 MB</span>
<span class="t c" id="r12d" style="left:1268px;width:100px;top:638.3px;letter-spacing:.55px">03/06/2021</span>
<span class="t c" id="r12c" style="left:1410px;width:100px;top:638.3px">33</span>

<!-- dropdown menu -->
<div class="a" id="dd" style="left:1540px;top:405px;width:228px;height:271px;border-radius:8px;background:#eeeae8;box-shadow:0 0 0 .5px rgba(0,0,0,.22),0 8px 22px rgba(0,0,0,.28),0 2px 5px rgba(0,0,0,.12)"></div>
<span class="t" id="d0" style="left:1558px;top:416.7px;color:#1d1d1f;word-spacing:.4px">Download</span>
<span class="t" id="d1" style="left:1558px;top:445.4px;color:#1d1d1f;word-spacing:.4px">Copy link code</span>
<span class="t" id="d2" style="left:1558px;top:474.1px;color:#1d1d1f;word-spacing:.4px">Move</span>
<span class="t" id="d3" style="left:1558px;top:502.8px;color:#1d1d1f;word-spacing:.4px">Rename</span>
<span class="t" id="d4" style="left:1558px;top:531.5px;color:#1d1d1f;word-spacing:.4px">Make a Copy</span>
<span class="t" id="d5" style="left:1558px;top:560.2px;color:#1d1d1f;word-spacing:.4px">Set Password</span>
<span class="t" id="d6" style="left:1558px;top:588.9px;color:#1d1d1f;word-spacing:.4px">Turn on Directlink</span>
<span class="t" id="d7" style="left:1558px;top:617.6px;color:#1d1d1f;word-spacing:.4px">Turn off Secure Storage</span>
<span class="t" id="d8" style="left:1558px;top:646.3px;color:#1d1d1f;word-spacing:.4px">Delete</span>
<div class="a" style="left:1534px;top:609px;width:240px;height:35px;border:5px solid #cc1417"></div>

<!-- dock -->
<div class="a" id="dockbg" style="left:185px;top:985.100px;width:1575px;height:70px;border-radius:15px;background:linear-gradient(90deg,#5f7fae 0%,#6680af 12%,#737aad 35%,#8179ad 55%,#8d78ad 72%,#a078b0 88%,#ae7ab4 100%);box-shadow:inset 0 0 0 1px rgba(255,255,255,.18),0 0 0 .5px rgba(0,0,0,.25)"></div>
<svg style="left:0;top:0" width="1920" height="1080" viewBox="0 0 1920 1080">
<defs><clipPath id="ck"><rect width="45" height="45" rx="10.200"/></clipPath><linearGradient id="gF" x1="0" y1="0" x2="0" y2="1"><stop offset="0" stop-color="#22b9f9"/><stop offset="1" stop-color="#1d6cf0"/></linearGradient><linearGradient id="gF2" x1="0" y1="0" x2="0" y2="1"><stop offset="0" stop-color="#f2f3f7"/><stop offset="1" stop-color="#dfe2ea"/></linearGradient><radialGradient id="gS1" cx=".5" cy=".45" r=".55"><stop offset="0" stop-color="#3a8fe0"/><stop offset=".45" stop-color="#2a5fc0"/><stop offset=".75" stop-color="#3a2a88"/><stop offset="1" stop-color="#1c1b4a"/></radialGradient><filter id="blr" x="-20%" y="-20%" width="140%" height="140%"><feGaussianBlur stdDeviation="1.3"/></filter><linearGradient id="gS" x1="0" y1="0" x2="1" y2="1"><stop offset="0" stop-color="#3a1655"/><stop offset="1" stop-color="#13233f"/></linearGradient><linearGradient id="gS2" x1="0" y1="0" x2="1" y2="1"><stop offset="0" stop-color="#d070e0"/><stop offset="1" stop-color="#50e0c0"/></linearGradient><filter id="blr2" x="-20%" y="-20%" width="140%" height="140%"><feGaussianBlur stdDeviation=".6"/></filter><linearGradient id="gL" x1="0" y1="0" x2="0" y2="1"><stop offset="0" stop-color="#dfe3ec"/><stop offset="1" stop-color="#c9cedb"/></linearGradient><linearGradient id="gSa" x1="0" y1="0" x2="0" y2="1"><stop offset="0" stop-color="#ffffff"/><stop offset="1" stop-color="#ececec"/></linearGradient><linearGradient id="gSa2" x1="0" y1="0" x2="0" y2="1"><stop offset="0" stop-color="#1fc2fb"/><stop offset="1" stop-color="#1c6cf0"/></linearGradient><linearGradient id="gM" x1="0" y1="0" x2="0" y2="1"><stop offset="0" stop-color="#1f86f3"/><stop offset="1" stop-color="#3fc8fb"/></linearGradient><linearGradient id="gM2" x1="0" y1="0" x2="0" y2="1"><stop offset="0" stop-color="#ffffff"/><stop offset="1" stop-color="#e9e9ee"/></linearGradient><linearGradient id="gC" x1="0" y1="0" x2="0" y2="1"><stop offset="0" stop-color="#c19359"/><stop offset="1" stop-color="#b08248"/></linearGradient><linearGradient id="gCa" x1="0" y1="0" x2="0" y2="1"><stop offset="0" stop-color="#ffffff"/><stop offset="1" stop-color="#f0f0f0"/></linearGradient><linearGradient id="gCa2" x1="0" y1="0" x2="0" y2="1"><stop offset="0" stop-color="#f9605b"/><stop offset="1" stop-color="#ee4540"/></linearGradient><linearGradient id="gN" x1="0" y1="0" x2="0" y2="1"><stop offset="0" stop-color="#ffffff"/><stop offset="1" stop-color="#efece6"/></linearGradient><linearGradient id="gN2" x1="0" y1="0" x2="0" y2="1"><stop offset="0" stop-color="#fdd84a"/><stop offset="1" stop-color="#fcc829"/></linearGradient><linearGradient id="gR" x1="0" y1="0" x2="0" y2="1"><stop offset="0" stop-color="#ffffff"/><stop offset="1" stop-color="#f1f1f1"/></linearGradient><linearGradient id="gP" x1="0" y1="0" x2="0" y2="1"><stop offset="0" stop-color="#ffffff"/><stop offset="1" stop-color="#f0f0f0"/></linearGradient><linearGradient id="gMs" x1="0" y1="0" x2="0" y2="1"><stop offset="0" stop-color="#62e86a"/><stop offset="1" stop-color="#22bf3a"/></linearGradient><linearGradient id="gMs2" x1="0" y1="0" x2="0" y2="1"><stop offset="0" stop-color="#ffffff"/><stop offset="1" stop-color="#d8f4dc"/></linearGradient><linearGradient id="gFt" x1="0" y1="0" x2="0" y2="1"><stop offset="0" stop-color="#62e86a"/><stop offset="1" stop-color="#22bf3a"/></linearGradient><linearGradient id="gFt2" x1="0" y1="0" x2="0" y2="1"><stop offset="0" stop-color="#ffffff"/><stop offset="1" stop-color="#d8f4dc"/></linearGradient><linearGradient id="gMu" x1="0" y1="0" x2="0" y2="1"><stop offset="0" stop-color="#fb5f78"/><stop offset="1" stop-color="#f9233b"/></linearGradient><linearGradient id="gPd" x1="0" y1="0" x2="0" y2="1"><stop offset="0" stop-color="#c56ef2"/><stop offset="1" stop-color="#7f2bc4"/></linearGradient><linearGradient id="gTv" x1="0" y1="0" x2="0" y2="1"><stop offset="0" stop-color="#26302f"/><stop offset="1" stop-color="#0f1414"/></linearGradient><linearGradient id="gNw" x1="0" y1="0" x2="0" y2="1"><stop offset="0" stop-color="#ffffff"/><stop offset="1" stop-color="#f2f2f2"/></linearGradient><linearGradient id="gNw2" x1="0" y1="0" x2="0" y2="1"><stop offset="0" stop-color="#fc5876"/><stop offset="1" stop-color="#f8355a"/></linearGradient><linearGradient id="gBk" x1="0" y1="0" x2="0" y2="1"><stop offset="0" stop-color="#fea127"/><stop offset="1" stop-color="#f47a20"/></linearGradient><linearGradient id="gBk2" x1="0" y1="0" x2="0" y2="1"><stop offset="0" stop-color="#ffffff"/><stop offset="1" stop-color="#f3ebe0"/></linearGradient><linearGradient id="gAp" x1="0" y1="0" x2="0" y2="1"><stop offset="0" stop-color="#21b8f9"/><stop offset="1" stop-color="#1b68e6"/></linearGradient><linearGradient id="gSp" x1="0" y1="0" x2="0" y2="1"><stop offset="0" stop-color="#d5d8db"/><stop offset="1" stop-color="#8f9295"/></linearGradient><linearGradient id="gCh" x1="0" y1="0" x2="0" y2="1"><stop offset="0" stop-color="#ffffff"/><stop offset="1" stop-color="#ededed"/></linearGradient>
<linearGradient id="gSk" x1="0" y1="0" x2="0" y2="1"><stop offset="0" stop-color="#22c4f2"/><stop offset="1" stop-color="#1a86d2"/></linearGradient>
<linearGradient id="gZm" x1="0" y1="0" x2="0" y2="1"><stop offset="0" stop-color="#4f98ff"/><stop offset="1" stop-color="#3873f3"/></linearGradient>
<linearGradient id="gXc" x1="0" y1="0" x2="0" y2="1"><stop offset="0" stop-color="#2fb0f6"/><stop offset="1" stop-color="#1a6fe8"/></linearGradient>
<linearGradient id="gTr" x1="0" y1="0" x2="1" y2="0"><stop offset="0" stop-color="#e6e7ea" stop-opacity=".96"/><stop offset=".45" stop-color="#f0f1f3" stop-opacity=".97"/><stop offset=".7" stop-color="#e2e3e6" stop-opacity=".96"/><stop offset="1" stop-color="#d8d9de" stop-opacity=".94"/></linearGradient>
<filter id="ish" x="-10%" y="-10%" width="120%" height="130%"><feDropShadow dx="0" dy=".8" stdDeviation=".9" flood-color="#000" flood-opacity=".28"/></filter>
</defs>
<svg x="195.9" y="996" width="45" height="45" viewBox="0 0 45 45" filter="url(#ish)"><!-- finder --><g clip-path="url(#ck)"><rect width="45" height="45" rx="10.200" fill="url(#gF)" /><path d="M25.500 0C22 6 19.800 14 19.200 25h6.300c-.3 7 .2 14 2 20H45V0z" fill="url(#gF2)"/></g><path d="M12 13v3.600M33.300 13v3.600" stroke="#222" stroke-width="1.800" stroke-linecap="round"/><path d="M8.800 29.500c7 7.500 20.500 7.500 27.500 0" fill="none" stroke="#222" stroke-width="1.500" stroke-linecap="round"/><path d="M25.500 0C22 6 19.800 14 19.200 25h6.300c-.3 7 .2 14 2 20" fill="none" stroke="#2a4a80" stroke-opacity=".35" stroke-width=".7"/></svg>
<svg x="253.1" y="996" width="45" height="45" viewBox="0 0 45 45" filter="url(#ish)"><!-- siri --><rect width="45" height="45" rx="10.200" fill="url(#gS)" /><circle cx="22.500" cy="22.500" r="18.800" fill="url(#gS1)"/><g filter="url(#blr)"><path d="M9 15c5-9 20-11 28-1-8-3-16-1-21 6z" fill="#e8409a" fill-opacity=".9"/><path d="M22 20c4 4 8 12 7 19-3-5-6-11-9-14z" fill="#e85ab0" fill-opacity=".75"/><path d="M24 20c5-2 12-1 15 4-5-1-10 0-14 1z" fill="#35d8a0" fill-opacity=".8"/><path d="M8 31c4-6 10-10 16-11-4 4-8 9-11 14z" fill="#40e0e8" fill-opacity=".8"/><path d="M12 33c6 5 16 5 22-2-6 2-14 2-22 2z" fill="#2a6fd8" fill-opacity=".8"/></g><path d="M22.500 15l1.300 5.200 7.200-3.200-5.500 5 6.500 3-7.500-.5-1 7-2-6.500-6.500 4.500 4.500-6.500-6-2 7.500-.5z" fill="#fff" fill-opacity=".92" filter="url(#blr2)"/><circle cx="22.500" cy="22.500" r="18.800" fill="none" stroke="url(#gS2)" stroke-width="1"/></svg>
<svg x="311.9" y="996" width="45" height="45" viewBox="0 0 45 45" filter="url(#ish)"><!-- launchpad --><rect width="45" height="45" rx="10.200" fill="url(#gL)" /><rect x="7.3" y="7.5" width="8.200" height="8" rx="2" fill="#3fe04a"/><rect x="18.5" y="7.5" width="8.200" height="8" rx="2" fill="#fdbf2e"/><rect x="29.7" y="7.5" width="8.200" height="8" rx="2" fill="#fb8f1e"/><rect x="7.3" y="18.7" width="8.200" height="8" rx="2" fill="#f2261f"/><rect x="18.5" y="18.7" width="8.200" height="8" rx="2" fill="#a8acb0"/><rect x="29.7" y="18.7" width="8.200" height="8" rx="2" fill="#fb3d63"/><rect x="7.3" y="29.9" width="8.200" height="8" rx="2" fill="#b750ea"/><rect x="18.5" y="29.9" width="8.200" height="8" rx="2" fill="#1fa4fb"/><rect x="29.7" y="29.9" width="8.200" height="8" rx="2" fill="#31d7a4"/></svg>
<svg x="370.5" y="996" width="45" height="45" viewBox="0 0 45 45" filter="url(#ish)"><!-- safari --><rect width="45" height="45" rx="10.200" fill="url(#gSa)" /><circle cx="22.500" cy="22.500" r="19.300" fill="url(#gSa2)"/><circle cx="22.500" cy="22.500" r="16.300" fill="none" stroke="#fff" stroke-opacity=".6" stroke-width="2.400" stroke-dasharray=".45 1.680"/><path d="M36.200 8.800L20.900 20.900l3.200 3.200z" fill="#f2423a"/><path d="M8.800 36.200l15.300-12.100-3.200-3.200z" fill="#f4f4f4"/></svg>
<svg x="429.3" y="996" width="45" height="45" viewBox="0 0 45 45" filter="url(#ish)"><!-- mail --><rect width="45" height="45" rx="10.200" fill="url(#gM)" /><rect x="6.500" y="12.300" width="32" height="20.500" rx="2.800" fill="url(#gM2)"/><path d="M7.500 13.500l13 11.200c1.200 1 2.800 1 4 0l13-11.200" fill="none" stroke="#c9ccd4" stroke-width="1.100"/><path d="M7.500 32l10.500-10M37.500 32L27 22" stroke="#d4d7de" stroke-width=".9"/></svg>
<svg x="486.9" y="996" width="45" height="45" viewBox="0 0 45 45" filter="url(#ish)"><!-- contacts --><rect x="40" y="8.500" width="6" height="9" rx="1.500" fill="#d8d4cc"/><rect x="40" y="15.500" width="6" height="8" rx="1.500" fill="#4fb4f4"/><rect x="40" y="23" width="6" height="8" rx="1.500" fill="#f59a23"/><rect x="40" y="30.500" width="6" height="8.500" rx="1.500" fill="#5fc64c"/><rect width="43.800" height="45" rx="9.800" fill="url(#gC)"/><circle cx="22" cy="22.500" r="13.600" fill="none" stroke="#a17843" stroke-width="1.100"/><circle cx="22" cy="18.500" r="4.900" fill="#a67c47"/><path d="M12 31.200c2-4.600 5.700-6.200 10-6.200s8 1.600 10 6.200a13.400 13.400 0 0 1-20 0z" fill="#a67c47"/></svg>
<svg x="545.2" y="996" width="45" height="45" viewBox="0 0 45 45" filter="url(#ish)"><!-- calendar --><g clip-path="url(#ck)"><rect width="45" height="45" rx="10.200" fill="url(#gCa)" /><rect width="45" height="13.800" fill="url(#gCa2)"/></g><text x="22.500" y="11" font-family="Liberation Sans,sans-serif" font-size="8.600" font-weight="bold" fill="#fff" text-anchor="middle">JUL</text><text x="22.500" y="38.200" font-family="Liberation Sans,sans-serif" font-size="29" fill="#1d1d1f" stroke="#f6f6f6" stroke-width=".55" text-anchor="middle" letter-spacing="-.5">23</text></svg>
<svg x="603.9" y="996" width="45" height="45" viewBox="0 0 45 45" filter="url(#ish)"><!-- notes --><g clip-path="url(#ck)"><rect width="45" height="45" rx="10.200" fill="url(#gN)" /><rect width="45" height="11.500" fill="url(#gN2)"/><rect y="11.500" width="45" height=".8" fill="#d9c27a"/><path d="M0 22.500h45M0 33.500h45" stroke="#dedbd6" stroke-width=".8"/><path d="M0 13.200h45" stroke="#cfcac0" stroke-width=".6" stroke-dasharray="1 1"/></g></svg>
<svg x="661.4" y="996" width="45" height="45" viewBox="0 0 45 45" filter="url(#ish)"><!-- reminders --><rect width="45" height="45" rx="10.200" fill="url(#gR)" /><circle cx="8.800" cy="11.2" r="3.500" fill="#fff" stroke="#1f7cf6" stroke-width=".9"/><circle cx="8.800" cy="11.2" r="2.200" fill="#1f7cf6"/><path d="M17 11.2h23" stroke="#c9c9cc" stroke-width=".9"/><circle cx="8.800" cy="22.5" r="3.500" fill="#fff" stroke="#f2372f" stroke-width=".9"/><circle cx="8.800" cy="22.5" r="2.200" fill="#f2372f"/><path d="M17 22.5h23" stroke="#c9c9cc" stroke-width=".9"/><circle cx="8.800" cy="33.8" r="3.500" fill="#fff" stroke="#fb9516" stroke-width=".9"/><circle cx="8.800" cy="33.8" r="2.200" fill="#fb9516"/><path d="M17 33.8h23" stroke="#c9c9cc" stroke-width=".9"/></svg>
<svg x="720.1" y="996" width="45" height="45" viewBox="0 0 45 45" filter="url(#ish)"><!-- maps --><g clip-path="url(#ck)"><rect width="45" height="45" rx="10.200" fill="#f1efe9" /><path d="M16 0h29v30L30 45H16z" fill="#e9e6df"/><circle cx="41" cy="4" r="26" fill="#6fd06a"/><circle cx="41" cy="4" r="19.500" fill="#f3f1ea"/><circle cx="41" cy="4" r="13" fill="#8fe07e"/><path d="M0 10L24 30l6 15h9L30 27 0 2z" fill="#f9d34c"/><path d="M0 10l24 20 6 15" fill="none" stroke="#e9b93c" stroke-width=".6"/><path d="M0 26l10 19H0z" fill="#f7b8c4"/><path d="M0 14v10l9 21h6z" fill="#f4f2ec"/><rect x="7" y="0" width="9.200" height="45" fill="#fff"/><rect x="8.900" y="0" width="5.400" height="26" fill="#1c8af6"/><circle cx="11.600" cy="26.500" r="7.600" fill="#fff"/><circle cx="11.600" cy="26.500" r="5" fill="#1c7cf4"/><path d="M25.500 29.800c3 .8 6 .6 9-.8 3 1.400 6 1.600 9 .8v4.200c0 6-3.200 9-9 11-5.800-2-9-5-9-11z" fill="#1f62c8" stroke="#fff" stroke-width="1"/><path d="M26.200 30.500c2.800.6 5.600.3 8.300-.9 2.700 1.200 5.500 1.500 8.300.9v2.800h-16.600z" fill="#e2352d"/></g><text x="34.500" y="40" font-family="Liberation Sans,sans-serif" font-size="6.200" font-weight="bold" fill="#fff" text-anchor="middle">280</text></svg>
<svg x="778.6" y="996" width="45" height="45" viewBox="0 0 45 45" filter="url(#ish)"><!-- photos --><rect width="45" height="45" rx="10.200" fill="url(#gP)" /><rect x="16.400" y="2.900" width="12.200" height="19.800" rx="6.100" fill="#f9941e" fill-opacity=".8" transform="rotate(0 22.500 22.500)"/><rect x="16.400" y="2.900" width="12.200" height="19.800" rx="6.100" fill="#f5d428" fill-opacity=".8" transform="rotate(45 22.500 22.500)"/><rect x="16.400" y="2.900" width="12.200" height="19.800" rx="6.100" fill="#a4cc39" fill-opacity=".8" transform="rotate(90 22.500 22.500)"/><rect x="16.400" y="2.900" width="12.200" height="19.800" rx="6.100" fill="#4db860" fill-opacity=".8" transform="rotate(135 22.500 22.500)"/><rect x="16.400" y="2.900" width="12.200" height="19.800" rx="6.100" fill="#3f9fe0" fill-opacity=".8" transform="rotate(180 22.500 22.500)"/><rect x="16.400" y="2.900" width="12.200" height="19.800" rx="6.100" fill="#6470cc" fill-opacity=".8" transform="rotate(225 22.500 22.500)"/><rect x="16.400" y="2.900" width="12.200" height="19.800" rx="6.100" fill="#b064c8" fill-opacity=".8" transform="rotate(270 22.500 22.500)"/><rect x="16.400" y="2.900" width="12.200" height="19.800" rx="6.100" fill="#ee5248" fill-opacity=".8" transform="rotate(315 22.500 22.500)"/></svg>
<svg x="835.9" y="996" width="45" height="45" viewBox="0 0 45 45" filter="url(#ish)"><!-- messages --><rect width="45" height="45" rx="10.200" fill="url(#gMs)" /><path d="M22.500 8.500c9.400 0 16.500 5.800 16.500 13.200S31.900 35 22.500 35c-1.700 0-3.300-.2-4.800-.6-1.600 1.500-4 2.700-6.700 2.800 1.300-1.300 2.200-3 2.400-4.700C9 30 6 26.200 6 21.700 6 14.300 13.100 8.500 22.500 8.500z" fill="url(#gMs2)"/></svg>
<svg x="894.6" y="996" width="45" height="45" viewBox="0 0 45 45" filter="url(#ish)"><!-- facetime --><rect width="45" height="45" rx="10.200" fill="url(#gFt)" /><rect x="6" y="12.800" width="22.300" height="19.500" rx="5" fill="url(#gFt2)"/><path d="M30 19.300l6-5c1-.8 2.200-.3 2.200 1v14.400c0 1.300-1.200 1.800-2.200 1l-6-5z" fill="#e4f6e6"/></svg>
<svg x="953.4" y="996" width="45" height="45" viewBox="0 0 45 45" filter="url(#ish)"><!-- music --><rect width="45" height="45" rx="10.200" fill="url(#gMu)" /><g transform="translate(22.500 22.500) scale(1.090) translate(-23.300 -22.200)"><path d="M17.300 11.500l15.800-3.600v20.600c0 2.600-2 4.300-4.600 4.300-2.200 0-3.700-1.300-3.700-3.200 0-2 1.600-3.300 4-3.700l1.700-.3V15l-10.600 2.400v14c0 2.600-2 4.400-4.600 4.400-2.200 0-3.700-1.300-3.700-3.200 0-2 1.600-3.300 4-3.700l1.700-.3z" fill="#fff"/></g></svg>
<svg x="1012.2" y="996" width="45" height="45" viewBox="0 0 45 45" filter="url(#ish)"><!-- podcasts --><rect width="45" height="45" rx="10.200" fill="url(#gPd)" /><g fill="none" stroke="#fff" stroke-width="1.700"><path d="M13.800 34.600a15.600 15.600 0 1 1 17.400 0" /><path d="M16.800 29.200a9.800 9.800 0 1 1 11.400 0"/></g><circle cx="22.500" cy="20.800" r="3.700" fill="#fff"/><path d="M19.300 28.500c0-1.800 1.300-2.800 3.200-2.800s3.200 1 3.200 2.800l-1 8.500c-.2 1.400-.9 2-2.200 2s-2-.6-2.200-2z" fill="#fff"/></svg>
<svg x="1069.5" y="996" width="45" height="45" viewBox="0 0 45 45" filter="url(#ish)"><!-- tv --><rect width="45" height="45" rx="10.200" fill="url(#gTv)" /><path transform="translate(4.600 12.600) scale(.8)" fill="#fff" d="M15.600 11.700c0-2.600 2.100-3.800 2.200-3.900-1.200-1.800-3.100-2-3.700-2-1.600-.2-3.100.9-3.900.9-.8 0-2-.9-3.400-.9-1.700 0-3.300 1-4.200 2.600-1.800 3.100-.5 7.700 1.300 10.200.9 1.200 1.900 2.600 3.200 2.600 1.300-.1 1.800-.8 3.300-.8 1.600 0 2 .8 3.400.8 1.400 0 2.300-1.300 3.100-2.500 1-1.400 1.400-2.800 1.400-2.900 0 0-2.700-1-2.700-4.100zM13 4c.7-.9 1.200-2.100 1.100-3.300-1 0-2.300.7-3 1.600-.7.7-1.300 2-1.100 3.100 1.100.1 2.300-.6 3-1.400z"/><text x="20.600" y="30.400" font-family="Liberation Sans,sans-serif" font-size="22" fill="#fff" stroke="#fff" stroke-width=".5" letter-spacing="-.3">tv</text></svg>
<svg x="1128.0" y="996" width="45" height="45" viewBox="0 0 45 45" filter="url(#ish)"><!-- news --><rect width="45" height="45" rx="10.200" fill="url(#gNw)" /><defs><clipPath id="cN"><rect x="9.300" y="9.300" width="26.400" height="26.400" rx="2.600"/></clipPath></defs><g clip-path="url(#cN)"><rect x="9" y="9" width="27" height="27" fill="#fff"/><path d="M9.300 9.300h9L35.700 26.700v9h-9L9.300 18.300z" fill="url(#gNw2)"/><path d="M23.900 9.300h11.800v11.800z" fill="#fb4a69"/><path d="M9.300 23.900v11.800h11.800z" fill="#fa4061"/></g></svg>
<svg x="1186.8" y="996" width="45" height="45" viewBox="0 0 45 45" filter="url(#ish)"><!-- books --><rect width="45" height="45" rx="10.200" fill="url(#gBk)" /><path d="M22.500 13c-3.200-2.900-9-3.600-15.500-2.100v21.300c6.500-1.500 12.300-.8 15.500 2.100 3.200-2.900 9-3.600 15.500-2.100V10.900c-6.500-1.500-12.300-.8-15.500 2.100z" fill="url(#gBk2)"/><path d="M22.500 13v21.300" stroke="#f08a20" stroke-width="1"/></svg>
<svg x="1244.3" y="996" width="45" height="45" viewBox="0 0 45 45" filter="url(#ish)"><!-- appstore --><rect width="45" height="45" rx="10.200" fill="url(#gAp)" /><g stroke="#fff" stroke-width="4" stroke-linecap="round" fill="none"><path d="M25.300 10.800l-10.300 17.800M12.500 33l-1.700 2.900M19.700 10.800l14.500 25.100M8.300 28.600h13.500M28.700 28.600h8"/></g></svg>
<svg x="1302.7" y="996" width="45" height="45" viewBox="0 0 45 45" filter="url(#ish)"><!-- sysprefs --><rect width="45" height="45" rx="10.200" fill="url(#gSp)" /><circle cx="22.500" cy="22.500" r="18.600" fill="#4a4c4e"/><circle cx="22.500" cy="22.500" r="18.900" fill="none" stroke="#37393b" stroke-width="2.400" stroke-dasharray="1.100 .880"/><circle cx="22.500" cy="22.500" r="16.800" fill="#8d9093"/><circle cx="22.500" cy="22.500" r="15.200" fill="#3b3d3f"/><circle cx="22.500" cy="22.500" r="13.400" fill="#6f7275"/><circle cx="22.500" cy="22.500" r="9" fill="none" stroke="#3f4143" stroke-width="3.400"/><g stroke="#9fa2a5" stroke-width="2.400" stroke-linecap="butt"><path d="M22.500 22.500h13.400M22.500 22.500l-6.700-11.600M22.500 22.500l-6.700 11.600"/></g><circle cx="22.500" cy="22.500" r="2.400" fill="#9fa2a5"/><circle cx="40" cy="4.500" r="10.500" fill="#f6403f"/><text x="40" y="8.200" font-family="Liberation Sans,sans-serif" font-size="10.200" fill="#fff" text-anchor="middle">1</text></svg>
<svg x="1361.6" y="996" width="45" height="45" viewBox="0 0 45 45" filter="url(#ish)"><!-- chrome --><rect width="45" height="45" rx="10.200" fill="url(#gCh)" /><path d="M14.95 26.70 L6.48 12.03 A19.0 19.0 0 0 1 39.34 13.80 L22.40 13.80 A8.6 8.6 0 0 0 14.95 26.70 Z" fill="#dd4b3e"/><path d="M22.40 13.80 L39.34 13.80 A19.0 19.0 0 0 1 21.38 41.37 L29.85 26.70 A8.6 8.6 0 0 0 22.40 13.80 Z" fill="#fbc73d"/><path d="M29.85 26.70 L21.38 41.37 A19.0 19.0 0 0 1 6.48 12.03 L14.95 26.70 A8.6 8.6 0 0 0 29.85 26.70 Z" fill="#27a463"/><circle cx="22.4" cy="22.4" r="8.600" fill="#fff"/><circle cx="22.4" cy="22.4" r="7" fill="#4c8bf5"/></svg>
<path d="M1426.700 994v52M1686.300 994v52" stroke="#3b2a6a" stroke-opacity=".55" stroke-width="1"/>
<g filter="url(#ish)"><circle cx="1459" cy="1007" r="12.500" fill="url(#gSk)"/><circle cx="1478.500" cy="1028.500" r="12.500" fill="url(#gSk)"/><circle cx="1468.500" cy="1018" r="19.500" fill="url(#gSk)"/></g>
<text x="1468.500" y="1028.800" font-family="Liberation Sans,sans-serif" font-weight="bold" font-size="30" fill="#fff" text-anchor="middle">S</text>
<rect x="1501.600" y="993.600" width="49.400" height="49.400" rx="14" fill="url(#gZm)" filter="url(#ish)"/><rect x="1510.500" y="1010" width="21.500" height="16.500" rx="3.500" fill="#fff"/><path d="M1533.500 1016.500l7.500-5.500v14.500l-7.500-5.500z" fill="#fff" stroke="#fff" stroke-width="1" stroke-linejoin="round"/>
<rect x="1562.200" y="996" width="45" height="45" rx="10.200" fill="url(#gXc)" filter="url(#ish)"/><rect x="1564.400" y="998.200" width="40.600" height="40.600" rx="8" fill="none" stroke="#bfe4ff" stroke-opacity=".7" stroke-width=".8"/><circle cx="1584.700" cy="1018.500" r="14" fill="none" stroke="#bfe4ff" stroke-opacity=".35" stroke-width=".7"/>
<g fill="none" stroke="#d6eeff" stroke-opacity=".9" stroke-width="1"><path d="M1586 1004l-13.500 26h3.500l13.500-26zM1581 1004l13.500 26h-3.500l-11.500-22M1569 1022.500h31v3h-31z"/></g>
<path d="M1578 1040.500l15.600-38.500 4.200 1.700-15.500 38.600c-.4 1-1.400 1.300-2.500.9l-1-.4c-1-.4-1.200-1.300-.8-2.300z" fill="#2c2c2e"/><path d="M1588.600 993.500c5-1.200 12-.2 17.600 3.500l4.800 3.800-2.200 4.600-5-2.300-1 2.300-8.600-3.600 1-2.500c-1.800-1.600-4-3-7.300-3.600z" fill="#3a3a3c"/><path d="M1592.300 1005.500l4.200 1.700-1.400 3.400-4.200-1.700z" fill="#8a8a8e"/>
<path d="M1671.0 1018.2L1670.9 1026.8L1670.5 1030.8L1669.8 1033.8L1668.9 1036.3L1667.7 1038.4L1666.2 1040.1L1664.4 1041.6L1662.3 1042.8L1659.8 1043.7L1656.6 1044.3L1652.6 1044.7L1643.8 1044.8L1635.0 1044.7L1631.0 1044.3L1627.8 1043.7L1625.3 1042.8L1623.2 1041.6L1621.4 1040.1L1619.9 1038.4L1618.7 1036.3L1617.8 1033.8L1617.1 1030.8L1616.7 1026.8L1616.6 1018.2L1616.7 1009.6L1617.1 1005.6L1617.8 1002.6L1618.7 1000.1L1619.9 998.0L1621.4 996.3L1623.2 994.8L1625.3 993.6L1627.8 992.7L1631.0 992.1L1635.0 991.7L1643.8 991.6L1652.6 991.7L1656.6 992.1L1659.8 992.7L1662.3 993.6L1664.4 994.8L1666.2 996.3L1667.7 998.0L1668.9 1000.1L1669.8 1002.6L1670.5 1005.6L1670.9 1009.6Z" fill="#cb1820" filter="url(#ish)"/>
<g transform="translate(1643.800 1018.200) scale(1.060) translate(-345.800 -114)"><path fill="#fff" d="M334.500 126h22.500a6.200 6.200 0 0 0 1.200-12.300a7.300 7.300 0 0 0-10.800-7.600a7.600 7.600 0 0 0-13.600 4.600a7.800 7.800 0 0 0 .7 15.300z"/><path fill="#cb1820" d="M340.200 119.200c.8-3.400 3.200-5.100 6.500-5.300v-2.100l4.600 3.900-4.600 3.900v-2.200c-2.700-.1-4.800.3-6.500 1.800z"/></g>
<path d="M1707.900 999c0-2.600 9-4.700 20-4.700s20 2.100 20 4.700l-4.400 38c-.4 3.500-6.600 6.200-15.300 6.200s-14.900-2.700-15.300-6.200z" fill="url(#gTr)"/><ellipse cx="1727.900" cy="999.200" rx="18.800" ry="4" fill="#d6c3da" stroke="#f0f0f4" stroke-width="1"/>
<circle cx="217.5" cy="1050.200" r="2.500" fill="#0b0b38"/>
<circle cx="393.0" cy="1050.200" r="2.500" fill="#0b0b38"/>
<circle cx="1384.3" cy="1050.200" r="2.500" fill="#0b0b38"/>
<circle cx="1468.0" cy="1050.200" r="2.500" fill="#0b0b38"/>
<circle cx="1583.8" cy="1050.200" r="2.500" fill="#0b0b38"/>
<circle cx="1642.3" cy="1050.200" r="2.500" fill="#0b0b38"/>
</svg>

<!-- frame -->
<div class="red" style="left:115px;top:0;width:1690px;height:19px"></div>
<div class="red" style="left:115px;top:1060px;width:1690px;height:20px"></div>
<div class="red" style="left:115px;top:0;width:23px;height:1080px"></div>
<div class="red" style="left:1782px;top:0;width:23px;height:1080px"></div>
<div class="a" style="left:1805px;top:0;width:115px;height:1080px;background:#fff"></div>
<div class="a" style="left:0;top:0;width:115px;height:1080px;background:#fff"></div>
</body>
</html>
